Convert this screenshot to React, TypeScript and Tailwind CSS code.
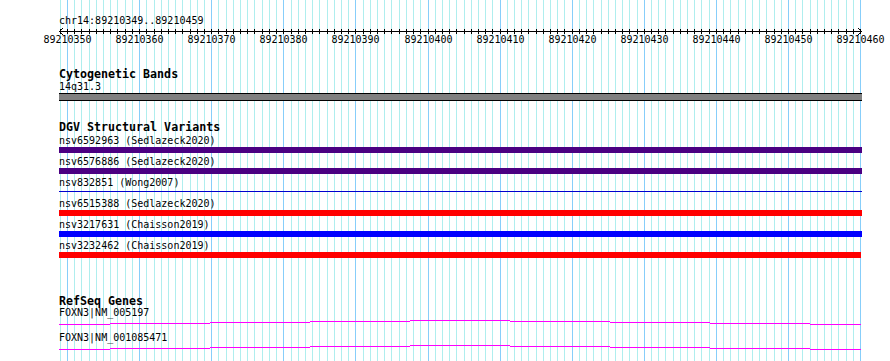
import React from 'react'

const X0 = 59.79
const STEP = 7.21
const gridX = Array.from({ length: 112 }, (_, j) => Math.round(X0 + STEP * j))
const labels = Array.from({ length: 12 }, (_, k) => ({
  x: gridX[1 + k * 10],
  text: String(89210350 + k * 10),
}))

const variants = [
  { name: 'nsv6592963 (Sedlazeck2020)', kind: 'bar', color: 'bg-[#4b0082]' },
  { name: 'nsv6576886 (Sedlazeck2020)', kind: 'bar', color: 'bg-[#4b0082]' },
  { name: 'nsv832851 (Wong2007)', kind: 'line', color: 'bg-[#0000cd]' },
  { name: 'nsv6515388 (Sedlazeck2020)', kind: 'bar', color: 'bg-[#ff0000]' },
  { name: 'nsv3217631 (Chaisson2019)', kind: 'bar', color: 'bg-[#0000ff]' },
  { name: 'nsv3232462 (Chaisson2019)', kind: 'bar', color: 'bg-[#ff0000] w-[802px]' },
]

const genes = ['FOXN3|NM_005197', 'FOXN3|NM_001085471']

// intron line: steps up toward the middle, then back down
const steps = [
  [59, 110, 5], [110, 210, 4], [210, 310, 3], [310, 410, 2], [410, 510, 1],
  [510, 610, 2], [610, 710, 3], [710, 810, 4], [810, 861, 5],
]

const mono = "font-['DejaVu_Sans_Mono','Liberation_Mono',monospace]"

function Grid() {
  return (
    <svg className="absolute inset-0" width={890} height={361}>
      {gridX.map((x, j) => (
        <rect key={j} x={x} y={0} width={1} height={361} fill={j % 10 === 1 ? '#87cefa' : '#afeeee'} />
      ))}
    </svg>
  )
}

function Ruler() {
  return (
    <svg width={890} height={20} className="block">
      <rect x={59} y={4} width={803} height={1} fill="#000" />
      {gridX.map((x, j) => (
        <rect key={j} x={x} y={2} width={1} height={5} fill="#000" />
      ))}
      <polyline points="63,1 59.5,4.5 63,8" fill="none" stroke="#000" />
      <polyline points="858,1 861.5,4.5 858,8" fill="none" stroke="#000" />
      {labels.map((l) => (
        <text
          key={l.text}
          x={l.x + 0.5}
          y={16}
          textAnchor="middle"
          fontSize={10}
          fontFamily="DejaVu Sans Mono, Liberation Mono, monospace"
          fill="#000"
        >
          {l.text}
        </text>
      ))}
    </svg>
  )
}

function TrackTitle({ title, className }: { title: string; className?: string }) {
  return <div className={`text-[11.65px] font-bold leading-[13px] ${className ?? ''}`}>{title}</div>
}

export default function App() {
  return (
    <div className={`relative w-[890px] h-[361px] overflow-hidden bg-white text-black ${mono}`}>
      <Grid />
      <div className="relative pt-[14px]">
        <div className="pl-[59px] text-[10px] leading-[13px]">chr14:89210349..89210459</div>
        <Ruler />

        {/* Cytogenetic Bands */}
        <div className="pl-[59px] mt-[21px] w-[862px]">
          <TrackTitle title="Cytogenetic Bands" className="h-[12px]" />
          <div className="text-[10px] leading-[13px]">14q31.3</div>
          <div className="h-[8px] border-y border-black bg-[#808080]" />
        </div>

        {/* DGV Structural Variants */}
        <div className="pl-[59px] mt-[20px] w-[862px]">
          <TrackTitle title="DGV Structural Variants" />
          {variants.map((v) => (
            <div key={v.name} className="h-[21px]">
              <div className="text-[10px] leading-[13px] whitespace-pre">{v.name}</div>
              {v.kind === 'bar' ? (
                <div className={`h-[6px] ${v.color}`} />
              ) : (
                <div className={`mt-[2px] h-[1px] ${v.color}`} />
              )}
            </div>
          ))}
        </div>

        {/* RefSeq Genes */}
        <div className="pl-[59px] mt-[35px] w-[862px]">
          <TrackTitle title="RefSeq Genes" className="h-[11px]" />
          {genes.map((g) => (
            <div key={g} className="h-[25px]">
              <div className="text-[10px] leading-[13px]">{g}</div>
              <svg width={803} height={6} className="block">
                {steps.map(([a, b, y]) => (
                  <rect key={a} x={a - 59} y={y} width={b - a} height={1} fill="#ff00ff" />
                ))}
              </svg>
            </div>
          ))}
        </div>
      </div>
    </div>
  )
}
